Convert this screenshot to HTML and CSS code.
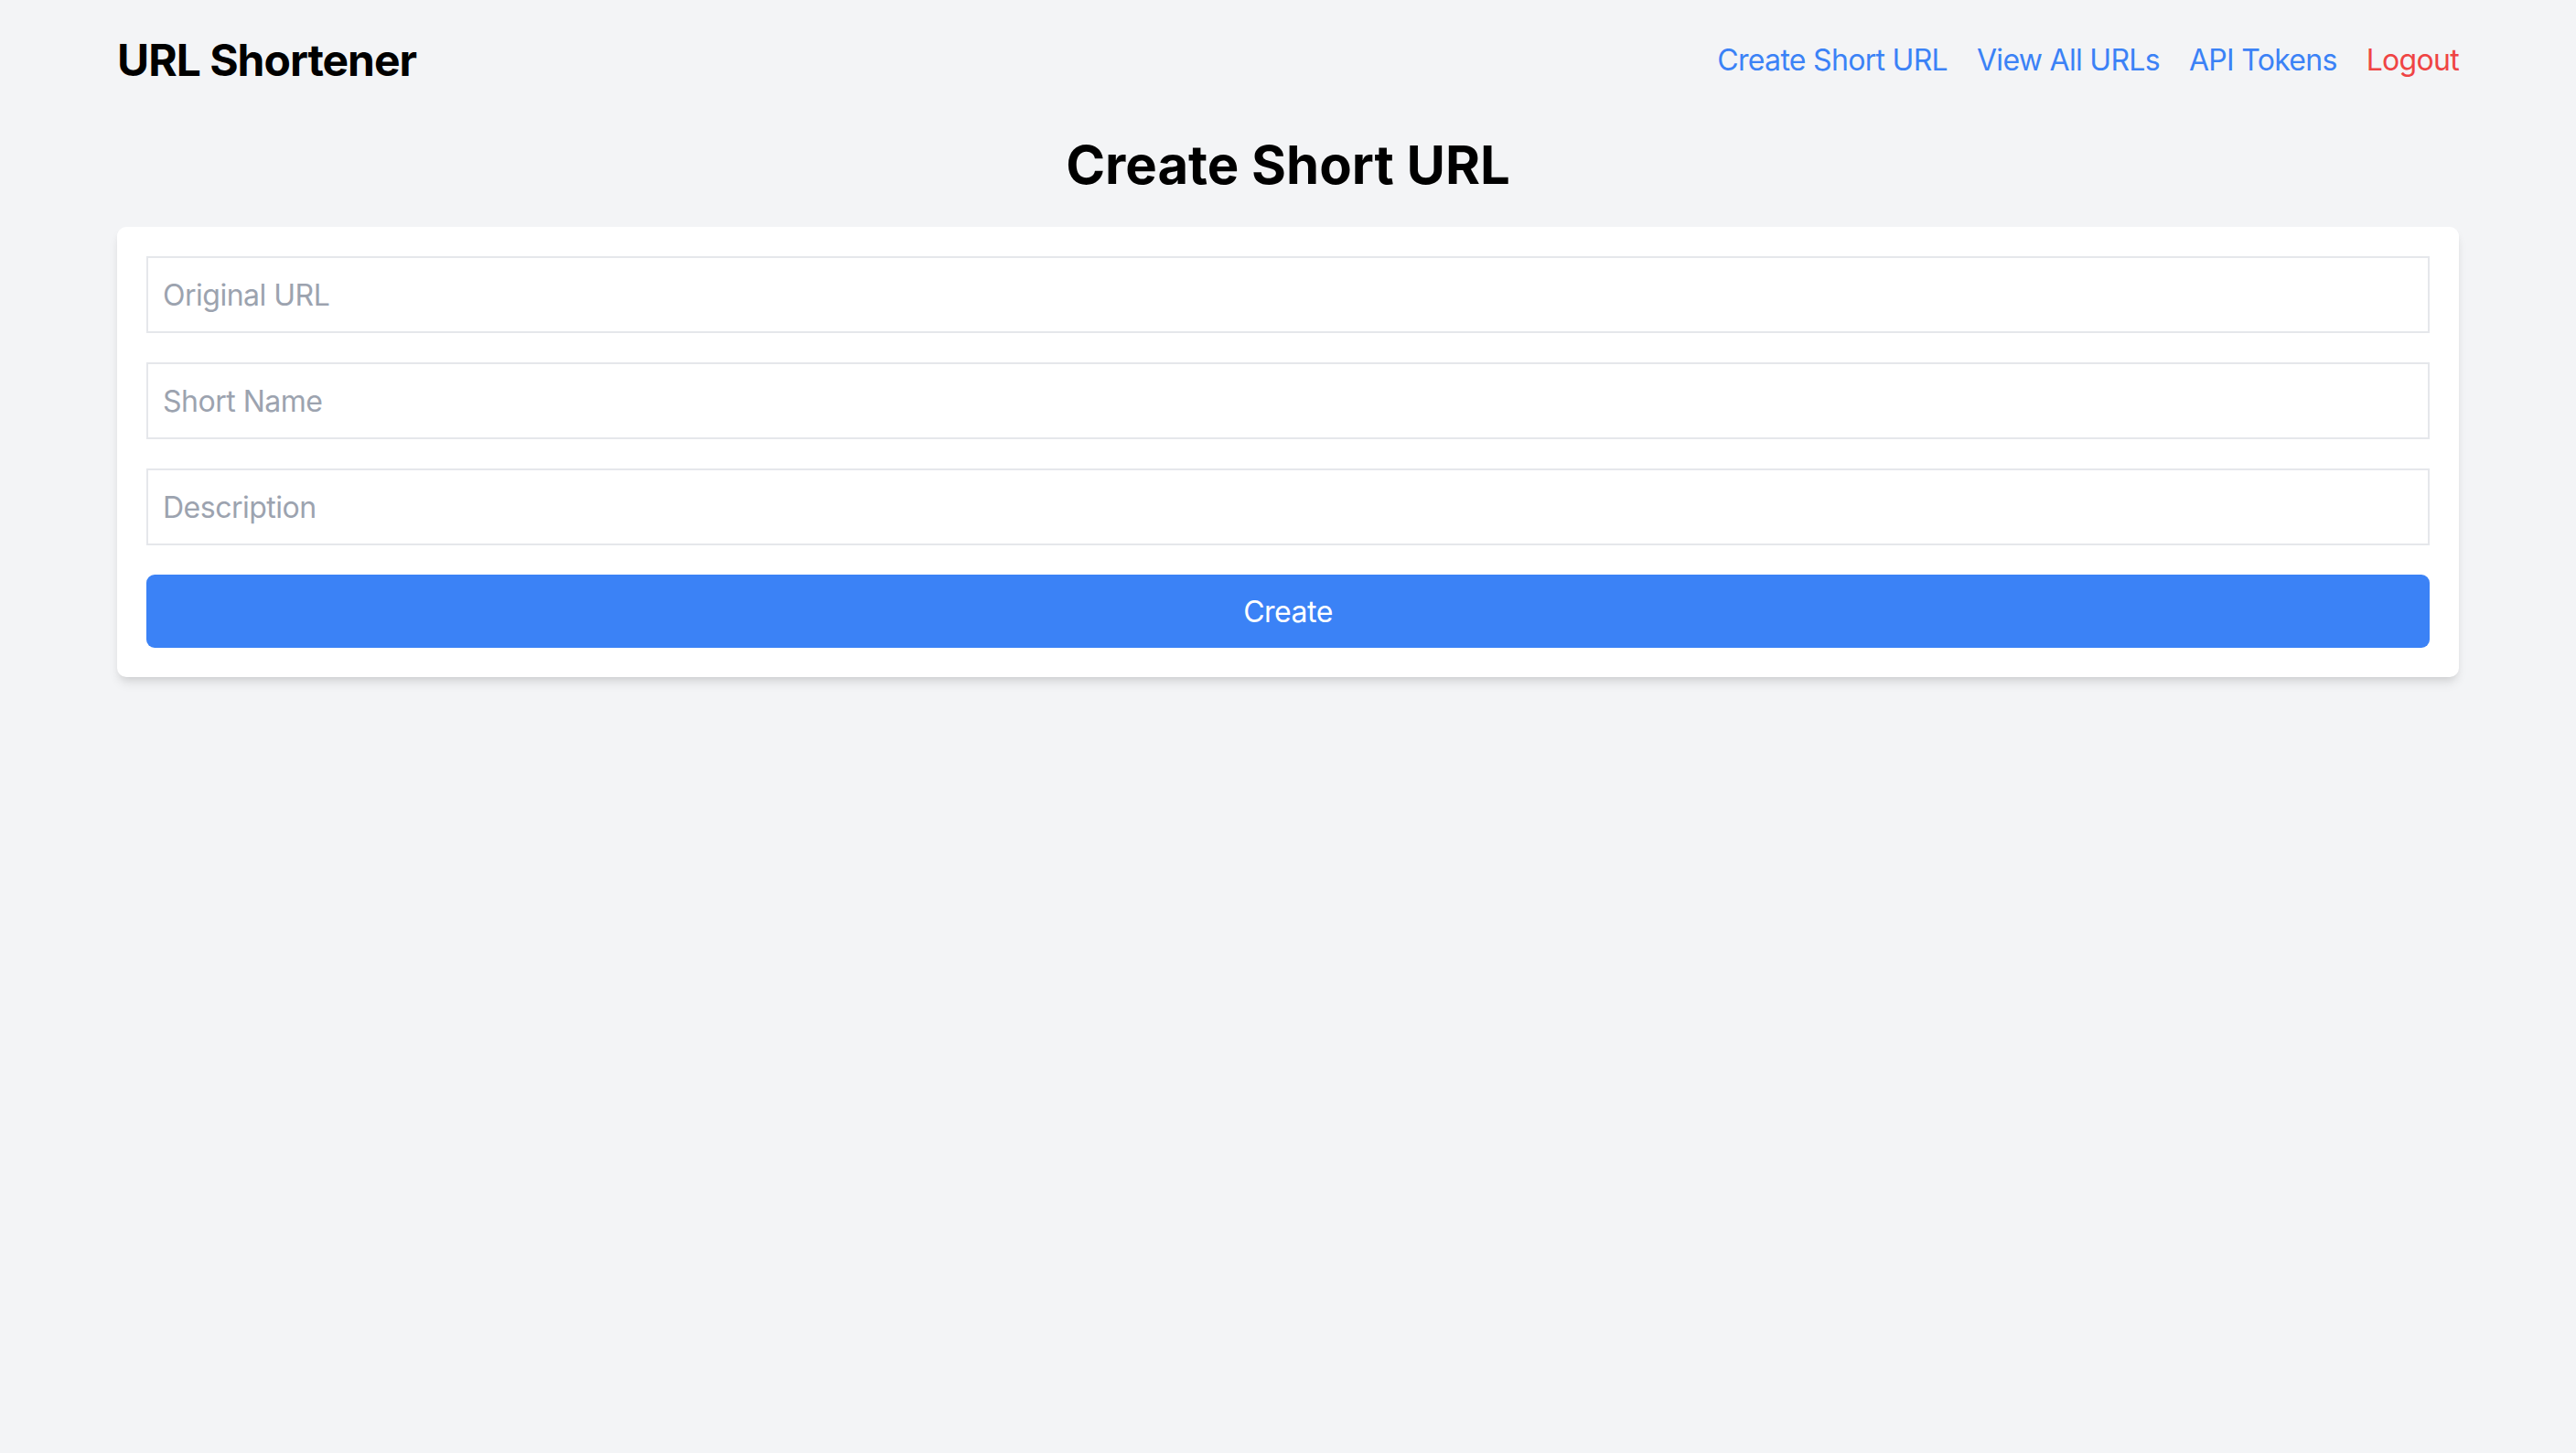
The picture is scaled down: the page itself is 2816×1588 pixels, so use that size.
FILE: index.html
```html
<!DOCTYPE html>
<html lang="en">
<head>
<meta charset="utf-8">
<title>URL Shortener</title>
<link rel="stylesheet" href="styles.css">
</head>
<body>
<div class="container">
  <header class="header">
    <h1 class="brand">URL Shortener</h1>
    <nav class="nav">
      <a href="#" class="nav-link">Create Short URL</a>
      <a href="#" class="nav-link">View All URLs</a>
      <a href="#" class="nav-link">API Tokens</a>
      <a href="#" class="nav-link logout">Logout</a>
    </nav>
  </header>
  <main>
    <h2 class="page-title">Create Short URL</h2>
    <form class="card">
      <input class="field" type="text" placeholder="Original URL">
      <input class="field" type="text" placeholder="Short Name">
      <input class="field" type="text" placeholder="Description">
      <button class="btn" type="button">Create</button>
    </form>
  </main>
</div>
</body>
</html>
```
FILE: styles.css
```css
* { box-sizing: border-box; }
html, body {
  margin: 0;
  padding: 0;
  background: #f3f4f6;
  font-family: Inter, "Noto Sans", "Liberation Sans", sans-serif;
  color: #000;
  min-height: 100vh;
}
.container {
  max-width: 2560px;
  margin: 0 auto;
}
.header {
  display: flex;
  justify-content: space-between;
  align-items: center;
  padding: 34px 0 30px;
}
.brand {
  margin: 0;
  font-size: 48px;
  line-height: 64px;
  font-weight: 700;
  letter-spacing: -1px;
}
.nav {
  display: flex;
  gap: 32px;
}
.nav-link {
  color: #3b82f6;
  text-decoration: none;
  font-size: 32px;
  line-height: 48px;
  letter-spacing: -0.7px;
}
.nav-link.logout { color: #ef4444; }
.page-title {
  margin: 16px 0 32px;
  text-align: center;
  font-size: 58px;
  line-height: 72px;
  font-weight: 700;
  letter-spacing: 0;
}
.card {
  background: #fff;
  border-radius: 10px;
  padding: 32px;
  box-shadow: 0 8px 12px -2px rgba(0,0,0,0.1), 0 4px 8px -4px rgba(0,0,0,0.1);
  display: flex;
  flex-direction: column;
  gap: 32px;
}
.field {
  display: block;
  width: 100%;
  height: 84px;
  border: 2px solid #e5e7eb;
  padding: 0 16px;
  font-family: inherit;
  font-size: 32px;
  color: #111827;
  background: #fff;
  outline: none;
  letter-spacing: -0.5px;
}
.field::placeholder { color: #9ca3af; }
.btn {
  display: block;
  width: 100%;
  height: 80px;
  border: 0;
  border-radius: 9px;
  background: #3b82f6;
  color: #fff;
  font-family: inherit;
  font-size: 32px;
  letter-spacing: -0.5px;
  cursor: pointer;
}
```
